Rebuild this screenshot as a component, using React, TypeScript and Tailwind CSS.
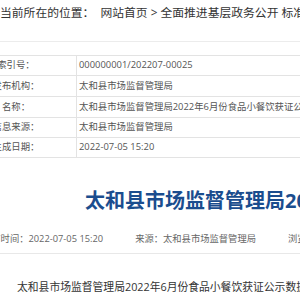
import React from "react";

const rows = [
  { label: "索引号：", value: "000000001/202207-00025", h: "h-[20px]" },
  { label: "发布机构：", value: "太和县市场监督管理局", h: "h-[21px]" },
  { label: "名称：", value: "太和县市场监督管理局2022年6月份食品小餐饮获证公示数据", h: "h-[21px]" },
  { label: "信息来源：", value: "太和县市场监督管理局", h: "h-[20px]" },
  { label: "生成日期：", value: "2022-07-05 15:20", h: "h-[20px]" },
];

const font = { fontFamily: '"Open Sans", "Noto Sans CJK SC", sans-serif' };

export default function App() {
  return (
    <div className="w-[300px] h-[300px] overflow-hidden bg-white" style={font}>
      {/* breadcrumb */}
      <div className="h-[26px] flex items-center whitespace-nowrap text-[11.8px] text-[#333]">
        <span>当前所在的位置：</span>
        <span className="ml-[6px]">网站首页 &gt; 全面推进基层政务公开 标准化规范化目录</span>
      </div>
      <div className="h-[16px] border-b border-[#ececec]" />

      {/* info table */}
      <div className="mt-[13px] ml-[-44px] w-[600px] border-t border-[#e3e3e3]">
        {rows.map((r) => (
          <div key={r.label} className={`flex border-b border-[#e3e3e3] ${r.h}`}>
            <div className="w-[121px] shrink-0 border-r border-[#e3e3e3] flex items-center justify-center text-[9.4px] text-[#555] whitespace-nowrap">
              {r.label}
            </div>
            <div className="flex items-center pl-[2px] text-[9.4px] text-[#555] whitespace-nowrap">
              {r.value}
            </div>
          </div>
        ))}
      </div>

      {/* title */}
      <h1 className="mt-[29px] pl-[85px] h-[28px] leading-[28px] whitespace-nowrap text-[20px] font-bold text-[#1b4d8e]">
        太和县市场监督管理局2022年6月份食品小餐饮获证公示数据
      </h1>

      {/* meta */}
      <div className="mt-[16px] border-b border-[#e8e8e8] pb-[6px]">
        <div className="ml-[-18px] flex gap-[32px] h-[16px] items-center whitespace-nowrap text-[9.3px] text-[#666]">
          <span>发布时间：2022-07-05 15:20</span>
          <span>来源：太和县市场监督管理局</span>
          <span>浏览次数：</span>
        </div>
      </div>

      {/* body */}
      <p className="mt-[23px] pl-[17px] h-[20px] leading-[20px] whitespace-nowrap text-[10.8px] text-[#333]">
        太和县市场监督管理局2022年6月份食品小餐饮获证公示数据如下：
      </p>
    </div>
  );
}
